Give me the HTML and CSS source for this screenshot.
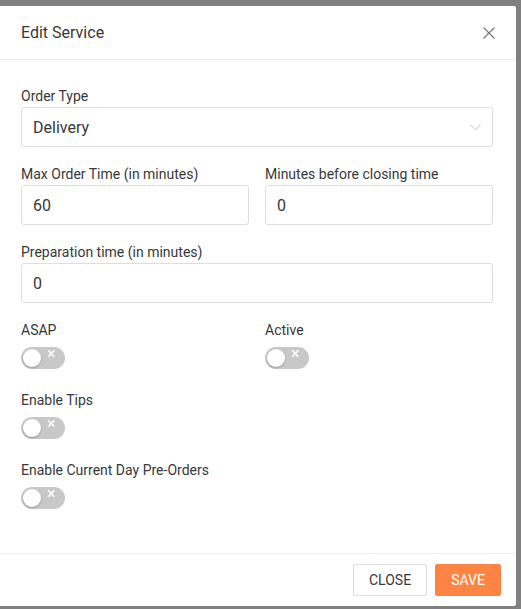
FILE: index.html
```html
<!DOCTYPE html>
<html>
<head>
<meta charset="utf-8">
<link rel="stylesheet" href="styles.css">
</head>
<body>
<div class="modal">
  <div class="modal-header">
    <h2 class="modal-title">Edit Service</h2>
    <button class="close-x" aria-label="Close">
      <svg width="12" height="12" viewBox="0 0 12 12"><path d="M0.5 0.5 L11.5 11.5 M11.5 0.5 L0.5 11.5" stroke="#7a7a7a" stroke-width="1.2" fill="none"/></svg>
    </button>
  </div>
  <div class="modal-body">
    <div class="field">
      <label class="label">Order Type</label>
      <div class="input select">
        <span>Delivery</span>
        <svg class="chev" width="11" height="7" viewBox="0 0 11 7"><path d="M0.5 0.5 L5.5 6 L10.5 0.5" stroke="#c4c4c4" stroke-width="1" fill="none"/></svg>
      </div>
    </div>
    <div class="row">
      <div class="field">
        <label class="label">Max Order Time (in minutes)</label>
        <div class="input">60</div>
      </div>
      <div class="field">
        <label class="label">Minutes before closing time</label>
        <div class="input">0</div>
      </div>
    </div>
    <div class="field">
      <label class="label">Preparation time (in minutes)</label>
      <div class="input">0</div>
    </div>
    <div class="row">
      <div class="field toggle-field">
        <label class="label">ASAP</label>
        <span class="toggle"><span class="knob"></span><span class="tx">×</span></span>
      </div>
      <div class="field toggle-field">
        <label class="label">Active</label>
        <span class="toggle"><span class="knob"></span><span class="tx">×</span></span>
      </div>
    </div>
    <div class="field toggle-field spaced">
      <label class="label">Enable Tips</label>
      <span class="toggle"><span class="knob"></span><span class="tx">×</span></span>
    </div>
    <div class="field toggle-field spaced">
      <label class="label">Enable Current Day Pre-Orders</label>
      <span class="toggle"><span class="knob"></span><span class="tx">×</span></span>
    </div>
  </div>
  <div class="modal-footer">
    <button class="btn btn-close">CLOSE</button>
    <button class="btn btn-save">SAVE</button>
  </div>
</div>
</body>
</html>
```

FILE: styles.css
```css
* { box-sizing: border-box; }
html, body { margin: 0; padding: 0; }
body {
  background: #808080;
  width: 521px;
  height: 609px;
  overflow: hidden;
  font-family: Roboto, "Liberation Sans", Arial, sans-serif;
  color: #383838;
}
.modal {
  margin-top: 6px;
  width: 516px;
  height: 600px;
  background: #fff;
  border-radius: 0 2px 2px 0;
  display: flex;
  flex-direction: column;
}
.modal-header {
  height: 54px;
  border-bottom: 1px solid #ebebeb;
  display: flex;
  align-items: center;
  justify-content: space-between;
  padding: 0 20px 0 21px;
}
.modal-title {
  margin: 0;
  font-size: 16px;
  font-weight: 400;
  color: #383838;
  line-height: 20px;
}
.close-x {
  border: 0;
  background: none;
  padding: 0;
  width: 12px;
  height: 12px;
  display: flex;
  margin-right: 1px;
}
.modal-body {
  flex: 1;
  padding: 26px 23px 0 21px;
  display: flex;
  flex-direction: column;
  gap: 17px;
}
.row {
  display: flex;
  gap: 16px;
}
.row > .field { flex: 1; min-width: 0; }
.field {
  display: flex;
  flex-direction: column;
}
.label {
  font-size: 14px;
  line-height: 20px;
  color: #383838;
  margin-bottom: 1px;
}
.input {
  height: 40px;
  border: 1px solid #dedede;
  border-radius: 3px;
  padding: 0 11px;
  font-size: 16px;
  display: flex;
  align-items: center;
  color: #383838;
}
.select { justify-content: space-between; padding-right: 11px; }
.chev { margin-top: 1px; }
.toggle-field .label { margin-bottom: 7px; }
.spaced { margin-top: 4px; }
.toggle {
  position: relative;
  display: block;
  width: 44px;
  height: 22px;
  border-radius: 11px;
  background: #c8c8c8;
}
.knob {
  position: absolute;
  left: 2px;
  top: 2px;
  width: 18px;
  height: 18px;
  border-radius: 50%;
  background: #fff;
  box-shadow: 0 1px 2px rgba(0,0,0,0.25);
}
.tx {
  position: absolute;
  left: 26px;
  top: -3px;
  font-size: 16px;
  line-height: 20px;
  color: #fff;
}
.modal-footer {
  border-top: 1px solid #ebebeb;
  height: 53px;
  display: flex;
  justify-content: flex-end;
  align-items: flex-start;
  gap: 8px;
  padding: 10px 15px 0 0;
}
.btn {
  height: 32px;
  font-family: Roboto, "Liberation Sans", Arial, sans-serif;
  font-size: 14px;
  border-radius: 2px;
  padding: 0 15px;
  cursor: pointer;
}
.btn-close {
  width: 74px;
  background: #fff;
  border: 1px solid #dcdcdc;
  color: #383838;
}
.btn-save {
  width: 66px;
  background: #fd8443;
  border: 1px solid #fd8443;
  color: #fff;
}
```
